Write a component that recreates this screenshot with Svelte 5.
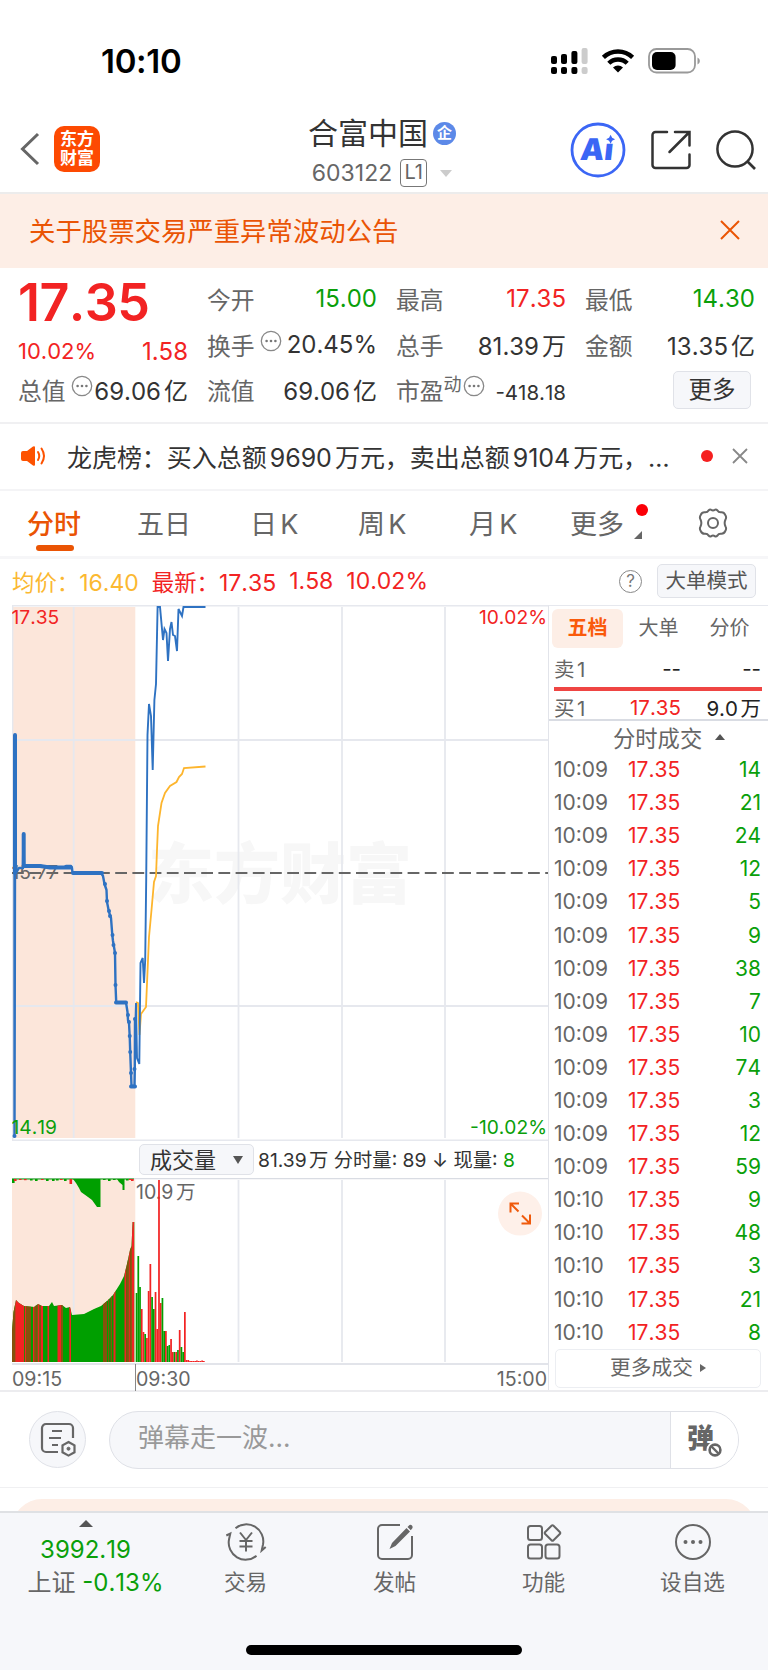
<script>
  const columns = [
    [
      { label: '今开', value: '15.00', tone: 'down' },
      { label: '换手', value: '20.45%', info: true },
      { label: '流值', value: '69.06亿' }
    ],
    [
      { label: '最高', value: '17.35', tone: 'up' },
      { label: '总手', value: '81.39万' },
      { label: '市盈', sup: '动', value: '-418.18', info: true, small: true }
    ],
    [
      { label: '最低', value: '14.30', tone: 'down' },
      { label: '金额', value: '13.35亿' }
    ]
  ];

  const trades = [
    ['10:09', 14], ['10:09', 21], ['10:09', 24], ['10:09', 12], ['10:09', 5], ['10:09', 9],
    ['10:09', 38], ['10:09', 7], ['10:09', 10], ['10:09', 74], ['10:09', 3], ['10:09', 12],
    ['10:09', 59], ['10:10', 9], ['10:10', 48], ['10:10', 3], ['10:10', 21], ['10:10', 8]
  ];

  // price line after the open, and the call auction before it
  const auction =
    '14.5,735 14.5,1136 15,873 15,834 16,873 19,868 23,868 23.5,835 24,866 28,865.5 40,865.5 43,866.5 48,866.5 52,867.5 64,867.5 66,866 71,866 72,868 72.5,873 101,873 103,876 104.5,884 106.5,890 107,902 109,912 111,918 112.3,935 113,941 115,953 115.5,985 116.2,1002 126,1002.5 127.5,1012 128,1020 129,1023 129.7,1036 130.2,1052 131,1073 131.5,1086 134.5,1086 134.8,1069 135,1019';
  const price =
    '135.5,1019 136,1003 137,1058 139.3,1064 140.5,963 142.7,958 144,983 145.2,960 146.2,880 147.5,735 149,704 151,716 152.7,770 154.4,700 156,684 157.6,607 160,607 163,640 164.5,629 166.5,633 168,661 170,629 171.5,622 173,635 175,636 177,651 178.5,609 180,612 182,616 183.5,607 205.5,607';
  const average =
    '136,1002 138,1003 139.5,1035 141,1014 146,1007 149,937 151.5,910 154,882 156,876 157,850 158,826 161.5,803 165,793 170,786 176.5,782 179,777 182,774 184,768 205.5,766.5';

  // [x, top] points of the auction volume outline
  const outline = [
    [12, 1331], [13.5, 1312], [16, 1300], [19, 1303], [24, 1306], [34, 1307], [38, 1304], [42, 1306],
    [49, 1306], [52, 1302], [54, 1306], [62, 1305], [66, 1308], [70, 1307], [72, 1315], [84, 1314],
    [94, 1309], [101, 1306], [107, 1301], [113, 1295], [120, 1284], [124, 1276], [127, 1264],
    [130, 1250], [131.5, 1246], [132.6, 1222], [134.3, 1222]
  ];
  const outlinePath = 'M12 1362 ' + outline.map((p) => `L${p[0]} ${p[1]}`).join(' ') + ' V1362 Z';

  // coloured stripes under the outline: x, width, tone
  const stripes = [
    [12, 2, 'mix'], [14, 1.2, 'mix'], [15.2, 9, 'up'], [25, 1, 'up'], [26, 5, 'mix'], [31.5, 1.2, 'down'],
    [33, 1.6, 'up'], [34.8, 2, 'mix'], [37.5, 2, 'up'], [39.5, 1.4, 'mix'], [41, 2, 'up'], [47.5, 1.6, 'up'],
    [57.5, 5, 'up'], [61, 1.5, 'mix'], [69.3, 1.7, 'up'], [103, 4, 'mix'], [108, 1.2, 'mix'], [110.6, 1.4, 'mix'],
    [113.5, 2, 'up'], [124.5, 1.6, 'up'], [126.2, 2, 'mix'], [128.5, 1.4, 'up'], [130, 1, 'mix'], [131.4, 3, 'up']
  ];
  const edge = [
    [12, 4, 'down'], [14, 2, 'up'], [19, 1, 'up'], [24, 1.2, 'up'], [30, 1.5, 'down'], [35, 2, 'down'],
    [41, 1, 'up'], [46, 2, 'down'], [52, 2, 'down'], [56, 1.5, 'down'], [60, 1, 'up'], [64, 2, 'down'],
    [69.5, 5, 'up'], [103, 1, 'down'], [108, 2, 'down'], [113, 1, 'down'], [126, 1.5, 'down'], [129, 1, 'up'], [131, 2, 'up']
  ];

  const bars = [
    [1293, 0], [1256, 0], [1287, 0], [1309, 1], [1332, 1], [1334, 0], [1338, 1], [1291, 1], [1264, 1],
    [1297, 0], [1309, 0], [1292, 1], [1329, 1], [1180, 1], [1303, 1], [1298, 0], [1331, 0], [1331, 1],
    [1346, 0], [1345, 0], [1339, 1], [1352, 1], [1352, 0], [1352, 1], [1350, 0], [1330, 1], [1347, 0],
    [1352, 0], [1312, 1], [1360, 1], [1360, 1], [1361, 1], [1361, 1], [1361, 1], [1361, 1], [1360.5, 1],
    [1361, 1], [1361, 1], [1360.5, 1], [1361, 1]
  ];
</script>

{#snippet dots()}
  <svg class="dots" width="22" height="22" viewBox="0 0 22 22">
    <circle cx="11" cy="11" r="9.7" fill="none" stroke="#888" stroke-width="1.3" />
    <circle cx="6.6" cy="11" r="1.3" fill="#777" /><circle cx="11" cy="11" r="1.3" fill="#777" /><circle cx="15.4" cy="11" r="1.3" fill="#777" />
  </svg>
{/snippet}

<main>
  <div class="status">
    <span class="clock">10:10</span>
    <svg width="150" height="28" viewBox="550 47 150 28">
      <g fill="#000">
        <rect x="551" y="56" width="6" height="8" rx="2" /><rect x="561" y="54" width="6" height="10" rx="2" /><rect x="571.4" y="51" width="6" height="13" rx="2" />
        <rect x="551" y="67" width="6" height="7" rx="2" /><rect x="561" y="67" width="6" height="7" rx="2" /><rect x="571.4" y="67" width="6" height="7" rx="2" />
      </g>
      <g fill="#ccc"><rect x="581.6" y="48" width="6" height="16" rx="2" /><rect x="581.6" y="67" width="6" height="7" rx="2" /></g>
      <g fill="none" stroke="#000" stroke-width="4.4">
        <path d="M603.4 57.4a21 21 0 0 1 29.2 0" /><path d="M608.8 63.3a13 13 0 0 1 18.4 0" />
      </g>
      <path d="M618 72.6l-5-5.2a7.2 7.2 0 0 1 10 0z" />
      <rect x="649" y="49" width="46" height="23.5" rx="7.5" fill="none" stroke="#999" stroke-width="1.8" />
      <rect x="652" y="52" width="23.6" height="18" rx="5" />
      <path d="M697.5 57.5q2.4 1 2.4 3.5t-2.4 3.5z" fill="#999" />
    </svg>
  </div>

  <header>
    <div class="left">
      <svg width="20" height="34" viewBox="0 0 20 34"><path d="M18 2L2.5 17L18 32" fill="none" stroke="#666" stroke-width="3" /></svg>
      <div class="logo"><span>东方</span><span>财富</span></div>
    </div>
    <div class="title">
      <div class="name">合富中国<span class="badge">企</span></div>
      <div class="code">603122<span class="level">L1</span><i class="caret"></i></div>
    </div>
    <div class="actions">
      <svg width="56" height="56" viewBox="0 0 56 56">
        <circle cx="28" cy="28" r="26" fill="none" stroke="#3b66f5" stroke-width="2.8" />
        <g class="ai" transform="skewX(-6)"><text x="13.500" y="37.800">A</text><text x="37.500" y="38.500">ı</text></g>
        <path d="M40.600 12.800l1.500 3 3 1.500-3 1.500-1.500 3-1.500-3-3-1.500 3-1.500z" fill="#3b66f5" />
      </svg>
      <svg width="42" height="42" viewBox="0 0 42 42">
        <path d="M17 3H5.500a3 3 0 0 0-3 3v30a3 3 0 0 0 3 3h31a3 3 0 0 0 3-3V25.500M25 3h14.500v13.500M39 3.500L19.500 23" fill="none" stroke="#333" stroke-width="2.500" stroke-linecap="round" />
      </svg>
      <svg width="42" height="42" viewBox="0 0 42 42">
        <circle cx="20" cy="20" r="17.600" fill="none" stroke="#333" stroke-width="2.500" /><path d="M32 32l8 8" stroke="#333" stroke-width="2.600" />
      </svg>
    </div>
  </header>

  <div class="notice">
    <span>关于股票交易严重异常波动公告</span>
    <svg width="20" height="20" viewBox="0 0 20 20"><path d="M1 1l18 18M19 1L1 19" stroke="#ea5404" stroke-width="2" /></svg>
  </div>

  <section class="quote">
    <div class="col">
      <div class="row last">17.35</div>
      <div class="row change"><span>10.02%</span><span class="diff">1.58</span></div>
      <div class="row"><span class="label">总值</span>{@render dots()}<span class="value">69.06亿</span></div>
    </div>
    {#each columns as col}
      <div class="col">
        {#each col as cell}
          <div class="row">
            <span class="label">{cell.label}{#if cell.sup}<sup>{cell.sup}</sup>{/if}</span>
            {#if cell.info}{@render dots()}{/if}
            <span class="value {cell.tone}" class:small={cell.small}>{cell.value}</span>
          </div>
        {/each}
        {#if col.length < 3}
          <div class="row"><button class="more">更多</button></div>
        {/if}
      </div>
    {/each}
  </section>

  <div class="ticker">
    <svg width="28" height="24" viewBox="0 0 28 24">
      <path d="M1 9q0-2 2-2h4l6-4.500q2-1 2 1v17q0 2-2 1l-6-4.500H3q-2 0-2-2z" fill="#fd5200" />
      <path d="M18 8q2.500 4 0 8M21.500 4.500q5 7.500 0 15" fill="none" stroke="#fd5200" stroke-width="2" stroke-linecap="round" />
    </svg>
    <span class="news">龙虎榜：买入总额9690万元，卖出总额9104万元，…</span>
    <i class="reddot"></i>
    <svg width="16" height="16" viewBox="0 0 16 16"><path d="M1 1l14 14M15 1L1 15" stroke="#888" stroke-width="1.800" /></svg>
  </div>

  <nav class="tabs">
    <span class="active">分时</span><span>五日</span><span>日K</span><span>周K</span><span>月K</span>
    <span class="drop">更多<i class="reddot"></i><i class="corner"></i></span>
    <svg width="32" height="32" viewBox="0 0 32 32" fill="none" stroke="#666" stroke-width="2">
      <path d="M11.500 3.500Q13 1.800 14.200 2.800Q16 4 17.800 2.800Q19 1.800 20.500 3.500Q21.500 5.500 24 5.300Q27 5 28.300 8Q29.800 10.500 28.500 12.500Q26.800 16 28.500 19.500Q29.800 21.500 28.300 24Q27 27 24 26.700Q21.500 26.500 20.500 28.500Q19 30.200 17.800 29.200Q16 28 14.200 29.200Q13 30.200 11.500 28.500Q10.500 26.500 8 26.700Q5 27 3.700 24Q2.200 21.500 3.500 19.500Q5.200 16 3.500 12.500Q2.200 10.500 3.700 8Q5 5 8 5.300Q10.500 5.500 11.500 3.500Z" />
      <circle cx="16" cy="16" r="5" />
    </svg>
  </nav>

  <div class="summary">
    <span class="avg">均价：<b>16.40</b></span>
    <span class="up now">最新：<b>17.35</b></span><span class="up num">1.58</span><span class="up num">10.02%</span>
    <span class="help">?</span>
    <button class="mode">大单模式</button>
  </div>

  <section class="board">
    <div class="charts">
      <svg class="main" width="536" height="536" viewBox="12 605 536 536">
        <rect x="12" y="607" width="123.300" height="531" fill="#fce6da" />
        <text x="148" y="898" class="watermark">东方财富</text>
        <g stroke="#e6e8ee" stroke-width="1.800">
          <path d="M12 605.500H549M12 740H549M12 1006H549M12 1140.500H549M73.700 607V1138M238.500 607V1138M342 607V1138M445 607V1138M12.500 605V1140" />
        </g>
        <path d="M12 873H549" stroke="#666" stroke-width="2" stroke-dasharray="11.800 5.400" />
        <text x="11.500" y="879" class="axis gray">15.77</text>
        <polyline points={average} fill="none" stroke="#fdb52d" stroke-width="1.800" />
        <path d="M15 735V873M23.700 834V866" stroke="#2e72c2" stroke-width="4" stroke-linecap="round" />
        <polyline points={auction} fill="none" stroke="#2e72c2" stroke-width="2.400" stroke-linejoin="round" />
        <path d="M24 866H40L50 867.500H71M73 873H102M116 1002.500H126M131 1086.500H135" fill="none" stroke="#2e72c2" stroke-width="4" stroke-linecap="round" />
        <path d="M105 884v0M107 901v0M109 911v0M110 916v0M112.500 935v0M113.500 945v0M115 953v0M115.500 985v0M128 1015v0M129 1022v0M129.700 1036v0M130.200 1052v0M131 1073v0M134.500 1069v0M135 1019v0M14.500 1136v0" stroke="#2e72c2" stroke-width="4" stroke-linecap="round" />
        <polyline points={price} fill="none" stroke="#2e72c2" stroke-width="1.900" />
        <text x="11.500" y="623.500" class="axis up">17.35</text>
        <text x="547" y="623.500" class="axis up end">10.02%</text>
        <text x="11.500" y="1133.500" class="axis down">14.19</text>
        <text x="547" y="1133.500" class="axis down end">-10.02%</text>
      </svg>

      <div class="volhead">
        <button>成交量<i></i></button>
        <span>81.39万 分时量: 89 ↓ 现量: <b class="down">8</b></span>
      </div>

      <svg class="volume" width="536" height="213" viewBox="12 1178 536 213">
        <defs><clipPath id="outline"><path d={outlinePath} /></clipPath></defs>
        <rect x="12" y="1179" width="123.300" height="183" fill="#fce6da" />
        <path d="M73.700 1180V1362M238.500 1180V1362M342 1180V1362M445 1180V1362" stroke="#e6e8ee" stroke-width="1.800" />
        <path d="M12 1178.600H549M12 1364H549" stroke="#d9dce3" stroke-width="1.400" />
        <text x="136" y="1199" class="vlabel">10.9万</text>
        <g clip-path="url(#outline)">
          <rect x="12" y="1200" width="123" height="162" class="bar-down" />
          {#each stripes as [x, width, tone]}
            <rect {x} y="1200" {width} height="162" class="bar-{tone}" />
          {/each}
        </g>
        <path d="M12 1179H134" stroke="#0a9f0a" stroke-width="1" />
        <path d="M73 1179L76 1183L79 1188L81 1192L88 1197L92 1200L97 1207H100.500V1179ZM117 1179L119 1182L122.500 1185V1190H124.500V1179Z" class="bar-down" />
        {#each edge as [x, height, tone]}
          <rect {x} y="1179" width="2.600" {height} class="bar-{tone}" />
        {/each}
        {#each bars as [top, rise], i}
          <rect x={135.700 + i * 1.725} y={top} width="1.725" height={1362 - top} class={rise ? 'bar-up' : 'bar-down'} />
        {/each}
        <path d="M135.500 1364V1391" stroke="#888" />
        <text x="12" y="1386" class="time">09:15</text>
        <text x="136" y="1386" class="time">09:30</text>
        <text x="547" y="1386" class="time end">15:00</text>
        <circle cx="520" cy="1213.600" r="22" fill="#fef0e9" />
        <path d="M518.500 1211.500L510.500 1203.500M510.500 1212.500V1203.500H519M522 1215.500L530 1223.500M530 1214.500V1223.500H521.500" fill="none" stroke="#ef5a0c" stroke-width="2" />
      </svg>
    </div>

    <aside>
      <div class="modes"><span class="active">五档</span><span>大单</span><span>分价</span></div>
      <div class="level-row"><span>卖1</span><span class="p">--</span><span class="v">--</span></div>
      <div class="bar"></div>
      <div class="level-row buy"><span>买1</span><span class="p up">17.35</span><span class="v">9.0万</span></div>
      <div class="deals">分时成交<i></i></div>
      <ul>
        {#each trades as [time, lots]}
          <li><span>{time}</span><span class="up">17.35</span><span class="down lots">{lots}</span></li>
        {/each}
      </ul>
      <button class="more-deals">更多成交<i></i></button>
    </aside>
  </section>

  <div class="comment">
    <div class="round">
      <svg width="36" height="36" viewBox="0 0 36 36" fill="none" stroke="#666" stroke-width="2.200">
        <path d="M33 16V6a4 4 0 0 0-4-4H6a4 4 0 0 0-4 4v20a4 4 0 0 0 4 4h12M12 9h10M9 16h12M12 23h6" />
        <path d="M28.500 20l6 3.300v7l-6 3.300-6-3.300v-7z" /><circle cx="28.500" cy="26.700" r="1.500" fill="#666" stroke-width="1" />
      </svg>
    </div>
    <div class="field">
      <span class="hint">弹幕走一波...</span>
      <div class="toggle">弹
        <svg width="18" height="18" viewBox="0 0 18 18"><circle cx="9" cy="9" r="8.500" fill="#fff" /><circle cx="9" cy="9" r="5.400" fill="none" stroke="#666" stroke-width="2.600" /><path d="M5 5l8 8" stroke="#666" stroke-width="2.400" /></svg>
      </div>
    </div>
  </div>

  <div class="peek"><div></div></div>

  <footer>
    <div class="items">
      <div class="index"><i></i><span class="down">3992.19</span><span class="line">上证 <b class="down">-0.13%</b></span></div>
      <div class="item">
        <svg width="42" height="38" viewBox="0 0 42 38" fill="none" stroke="#666" stroke-width="2">
          <path d="M10.500 5.200A17 17 0 0 1 38 21.500l-1.300 6 4-3.500M31.500 32.800A17 17 0 0 1 4 16.500L5.300 10.500l-4 2" />
          <path d="M15 9.500l6 7.500 6-7.500M21 17v11.500M14.500 18h13M14.500 23.500h13" />
        </svg>
        <span>交易</span>
      </div>
      <div class="item">
        <svg width="38" height="38" viewBox="0 0 38 38">
          <path d="M24 2H6a4 4 0 0 0-4 4v26a4 4 0 0 0 4 4h26a4 4 0 0 0 4-4V13" fill="none" stroke="#666" stroke-width="2" />
          <path d="M13.500 26l2.500-6L30.500 5l3.500 3.500L19.500 23zM31.500 4l2-2q1.500-.5 2.500.5t.5 2.500l-1.700 2.200z" fill="#666" />
        </svg>
        <span>发帖</span>
      </div>
      <div class="item">
        <svg width="36" height="38" viewBox="0 0 36 38" fill="none" stroke="#666" stroke-width="2">
          <rect x="2" y="3" width="14" height="14" rx="2.500" /><rect x="2" y="21.500" width="14" height="14" rx="2.500" /><rect x="19.500" y="21.500" width="14" height="14" rx="2.500" />
          <path d="M25.500 2.700q1-1 2 0l6.300 6.300q1 1 0 2l-6.300 6.300q-1 1-2 0L19.200 11q-1-1 0-2z" />
        </svg>
        <span>功能</span>
      </div>
      <div class="item">
        <svg width="38" height="38" viewBox="0 0 38 38">
          <circle cx="19" cy="19" r="17" fill="none" stroke="#666" stroke-width="2" />
          <g fill="#666"><circle cx="11.500" cy="19" r="2" /><circle cx="19" cy="19" r="2" /><circle cx="26.500" cy="19" r="2" /></g>
        </svg>
        <span>设自选</span>
      </div>
    </div>
    <div class="home"></div>
  </footer>
</main>

<style>
  :global(body) {
    background: #fff;
  }

  main {
    width: 768px;
    height: 1670px;
    overflow: hidden;
    font-family: Inter, 'Noto Sans CJK SC', sans-serif;
    color: #333;
    text-autospace: normal;
    white-space: nowrap;
  }

  main * {
    box-sizing: border-box;
  }

  svg {
    display: block;
    flex: none;
  }

  button {
    font: inherit;
    color: inherit;
    padding: 0;
    background: #f6f7fa;
    border: 1.5px solid #e0e2e8;
    border-radius: 5px;
  }

  b {
    font-weight: inherit;
  }

  .up {
    color: #f22323;
    fill: #f22323;
  }

  .down {
    color: #0a9f0a;
    fill: #0a9f0a;
  }

  .status {
    height: 100px;
    padding: 47px 68px 0 101px;
    display: flex;
    justify-content: space-between;
  }

  .clock {
    font-size: 33px;
    font-weight: 600;
    line-height: 29px;
    color: #000;
    letter-spacing: -0.3px;
  }

  header {
    height: 92px;
    display: grid;
    grid-template-columns: 198px 1fr 202px;
  }

  .left {
    display: flex;
    align-items: center;
    padding: 5px 0 0 20px;
    gap: 14px;
  }

  .logo {
    width: 46px;
    height: 46px;
    border-radius: 10px;
    background: #fd4a02;
    color: #fff;
    font-size: 17px;
    font-weight: 700;
    line-height: 19px;
    display: flex;
    flex-direction: column;
    align-items: center;
    justify-content: center;
  }

  .title {
    display: flex;
    flex-direction: column;
    align-items: center;
    padding-top: 13px;
  }

  .name {
    display: flex;
    align-items: center;
    font-size: 30px;
    line-height: 40px;
  }

  .badge {
    width: 23px;
    height: 23px;
    margin-left: 5px;
    border-radius: 50%;
    background: #5c89e8;
    color: #fff;
    font-size: 15px;
    font-weight: 700;
    line-height: 22px;
    text-align: center;
  }

  .code {
    display: flex;
    align-items: center;
    font-size: 23px;
    line-height: 40px;
    color: #666;
  }

  .level {
    width: 27px;
    height: 28px;
    margin: 0 13px 0 8px;
    border: 1.5px solid #777;
    border-radius: 4px;
    line-height: 25px;
    text-align: center;
    font-size: 20px;
  }

  .caret {
    border: 6px solid transparent;
    border-top: 7px solid #ccc;
    border-bottom: 0;
  }

  .actions {
    display: flex;
    align-items: center;
    padding: 6px 0 0 4px;
  }

  .actions svg:nth-child(2) {
    margin: 0 23px 0 24px;
  }

  .ai {
    font-size: 30px;
    font-weight: 900;
    fill: #3b66f5;
  }

  .notice {
    height: 76px;
    padding: 0 28px 3px 29px;
    border-top: 2px solid #ececec;
    background: #fdeee6;
    color: #ea5404;
    font-size: 26.4px;
    display: flex;
    align-items: center;
    justify-content: space-between;
  }

  .quote {
    height: 156px;
    padding: 8px 13px 0 18px;
    border-bottom: 2px solid #f0f0f2;
    display: grid;
    grid-template-columns: repeat(4, 170px);
    gap: 19px;
    font-kerning: none;
  }

  .row {
    height: 45.5px;
    display: flex;
    align-items: center;
    font-size: 24px;
  }

  .row.last {
    font-size: 52px;
    font-weight: 600;
    letter-spacing: -0.6px;
    color: #f22323;
    padding-top: 8px;
  }

  .row.change {
    color: #f22323;
    font-size: 22px;
    justify-content: space-between;
    padding-top: 14px;
  }

  .diff {
    font-size: 24px;
  }

  .label {
    color: #666;
    font-size: 23.8px;
  }

  .label sup {
    font-size: 18px;
    line-height: 0;
    vertical-align: 9px;
  }

  .dots {
    margin: -7px 0 0 5px;
  }

  .label:has(sup) + .dots {
    margin-left: 1px;
  }

  .value {
    margin-left: auto;
  }

  .value.small {
    font-size: 20.5px;
    padding-top: 5px;
  }

  .more {
    width: 78px;
    height: 38px;
    margin: 0 4px 0 auto;
    font-size: 23.5px;
    line-height: 34px;
  }

  .ticker {
    height: 67px;
    padding: 0 20px 2px 20px;
    border-bottom: 2px solid #f4f4f6;
    display: flex;
    align-items: center;
  }

  .news {
    width: 634px;
    margin-left: 19px;
    font-size: 25px;
    letter-spacing: -0.05px;
  }

  .reddot {
    width: 12px;
    height: 12px;
    border-radius: 50%;
    background: #f52020;
  }

  .ticker .reddot {
    margin-right: 19px;
  }

  .tabs {
    height: 68px;
    padding: 0 0 2px 27px;
    border-bottom: 3px solid #f6f6f8;
    display: grid;
    grid-template-columns: 110px 113px 108px 111px 101px 127px 40px;
    align-items: center;
    font-size: 27px;
    color: #666;
  }

  .tabs .active {
    width: 54px;
    color: #ea5404;
    position: relative;
    font-weight: 500;
  }

  .tabs .active::after {
    content: '';
    position: absolute;
    left: 9px;
    bottom: -9px;
    width: 38px;
    height: 6px;
    border-radius: 3px;
    background: #ea5404;
  }

  .drop {
    width: 83px;
    position: relative;
  }

  .drop .reddot {
    position: absolute;
    right: 5px;
    top: 1px;
    background: #fb0007;
  }

  .corner {
    position: absolute;
    right: 11px;
    bottom: 3px;
    border-left: 8px solid transparent;
    border-bottom: 8px solid #666;
  }

  .summary {
    height: 46px;
    padding: 0 12px 2px;
    display: flex;
    align-items: center;
    font-size: 22.4px;
    font-kerning: none;
  }

  .summary b,
  .num {
    font-size: 23px;
  }

  .avg {
    color: #fbb831;
  }

  .now {
    margin-left: 13px;
  }

  .num {
    margin-left: 13px;
  }

  .help {
    width: 23px;
    height: 23px;
    margin: 0 15px 0 auto;
    border: 1.5px solid #888;
    border-radius: 50%;
    font-size: 17px;
    line-height: 20px;
    text-align: center;
    color: #777;
  }

  .mode {
    width: 99px;
    height: 34px;
    font-size: 20.5px;
    line-height: 30px;
    color: #555;
  }

  .board {
    height: 787px;
    padding-left: 12px;
    border-bottom: 2px solid #ececef;
    display: flex;
  }

  .charts {
    width: 536px;
  }

  .watermark {
    font-size: 66px;
    font-weight: 900;
    fill: #f7f7f7;
  }

  .axis {
    font-size: 19.2px;
    font-kerning: none;
  }

  .gray,
  .vlabel,
  .time {
    fill: #666;
  }

  .vlabel,
  .time {
    font-size: 19.6px;
  }

  .end {
    text-anchor: end;
  }

  .bar-up {
    fill: #f22323;
  }

  .bar-down {
    fill: #009f00;
  }

  .bar-mix {
    fill: #85520c;
  }

  .volhead {
    height: 37px;
    padding: 0 0 1px 127px;
    display: flex;
    align-items: center;
    font-size: 19.3px;
  }

  .volhead button {
    width: 115px;
    height: 31px;
    margin: 1px 4px 0 0;
    display: flex;
    align-items: center;
    justify-content: center;
    gap: 17px;
    font-size: 22px;
    line-height: 26px;
  }

  .volhead i {
    border: 5px solid transparent;
    border-top: 8px solid #555;
    border-bottom: 0;
  }

  aside {
    width: 220px;
    border-left: 1.5px solid #e2e4ea;
    border-top: 1px solid #e6e8ee;
    color: #666;
    font-kerning: none;
  }

  .modes {
    height: 42px;
    padding: 3px 2px 0 3px;
    display: flex;
    font-size: 20px;
    line-height: 38px;
    text-align: center;
  }

  .modes span {
    width: 71px;
  }

  .modes .active {
    background: #fdeee6;
    border-radius: 6px;
    color: #fa5a0a;
    font-weight: 700;
  }

  .level-row {
    height: 39px;
    padding: 1px 7px 0 5px;
    display: grid;
    grid-template-columns: 50px 77px 1fr;
    align-items: center;
    font-size: 20.5px;
  }

  .level-row span:nth-child(n + 2) {
    text-align: right;
  }

  .v,
  .level-row .p:not(.up) {
    color: #222;
  }

  .bar {
    height: 4px;
    margin: 0 6px 0 5px;
    background: #ef4543;
  }

  .buy {
    height: 30px;
    border-bottom: 2px solid #d9dce3;
  }

  .deals {
    height: 32px;
    padding: 0 0 0 64px;
    display: flex;
    align-items: center;
    gap: 13px;
    font-size: 22.3px;
  }

  .deals i {
    border: 5px solid transparent;
    border-bottom: 6px solid #555;
    border-top: 0;
  }

  ul {
    list-style: none;
    margin: 0;
    padding: 0 7px 0 5px;
  }

  li {
    height: 33.1px;
    display: grid;
    grid-template-columns: 74px 60px 1fr;
    align-items: center;
    font-size: 21px;
  }

  .lots {
    text-align: right;
  }

  .more-deals {
    width: 206px;
    height: 39px;
    margin-left: 6px;
    background: #fff;
    border-color: #eceef2;
    font-size: 20.7px;
    line-height: 34px;
    display: flex;
    align-items: center;
    justify-content: center;
    gap: 7px;
  }

  .more-deals i {
    border: 4.5px solid transparent;
    border-left: 6px solid #666;
    border-right: 0;
  }

  .comment {
    height: 96px;
    padding: 0 29px;
    border-bottom: 1.5px solid #f0f0f2;
    display: flex;
    align-items: center;
    justify-content: space-between;
  }

  .round {
    width: 57px;
    height: 57px;
    border: 1.5px solid #e0e2e8;
    border-radius: 50%;
    background: #f6f7fa;
    display: flex;
    align-items: center;
    justify-content: center;
  }

  .field {
    width: 630px;
    height: 58px;
    border: 1.5px solid #dfe1e7;
    border-radius: 29px;
    background: #f6f7fa;
    overflow: hidden;
    display: flex;
    justify-content: space-between;
  }

  .hint {
    padding-left: 28px;
    font-size: 26px;
    line-height: 51px;
    color: #999;
  }

  .toggle {
    width: 68px;
    border-left: 1.5px solid #dfe1e7;
    background: #fff;
    padding-left: 16px;
    font-size: 27px;
    font-weight: 900;
    line-height: 53px;
    color: #666;
    position: relative;
  }

  .toggle svg {
    position: absolute;
    left: 35px;
    top: 29px;
  }

  .peek {
    height: 23px;
    padding: 11px 12px 0;
    overflow: hidden;
  }

  .peek div {
    height: 60px;
    border-radius: 30px;
    background: #fdeee6;
  }

  footer {
    height: 159px;
    border-top: 2px solid #dfe1e4;
    background: #f6f7fa;
  }

  .items {
    height: 132px;
    display: grid;
    grid-template-columns: 171px repeat(4, 149px);
    color: #666;
    font-size: 21.6px;
  }

  .index,
  .item {
    display: flex;
    flex-direction: column;
    align-items: center;
  }

  .index i {
    margin: 7px 0 6px;
    border: 7px solid transparent;
    border-bottom: 7px solid #555;
    border-top: 0;
  }

  .index .down {
    font-size: 24px;
    line-height: 33px;
    font-kerning: none;
  }

  .line {
    margin-left: 20px;
    font-size: 24px;
    line-height: 33px;
  }

  .item {
    padding-top: 10px;
  }

  .item span {
    line-height: 32px;
    margin-top: 5px;
  }

  .home {
    width: 276px;
    height: 10px;
    margin: 0 auto;
    border-radius: 5px;
    background: #000;
  }
</style>
